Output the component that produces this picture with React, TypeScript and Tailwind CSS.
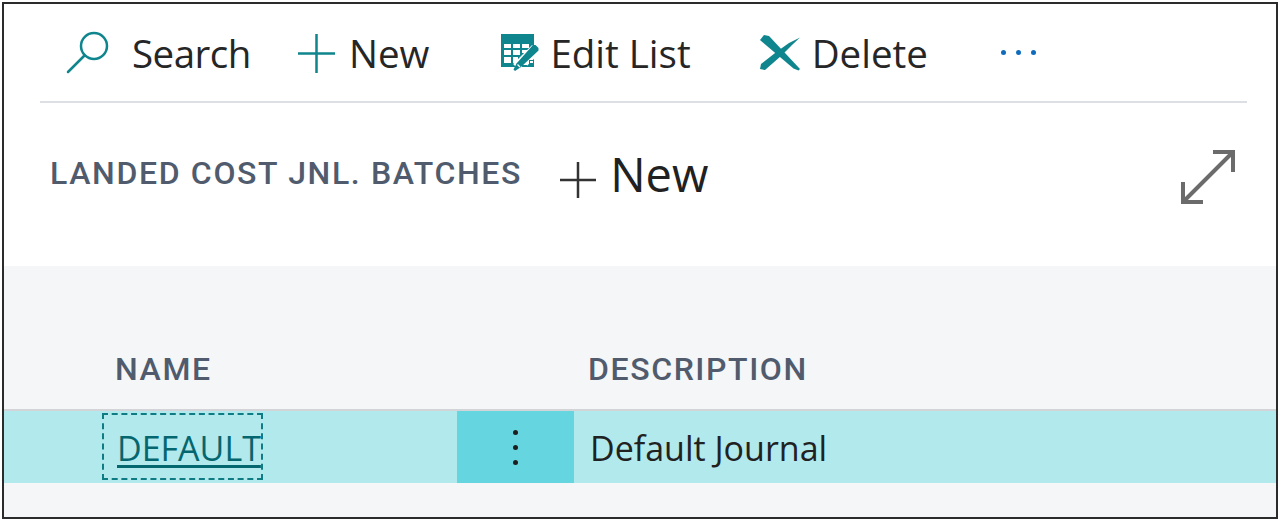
const sans = "font-['Open_Sans','Noto_Sans',sans-serif]";

function EditListIcon() {
  return (
    <svg width="39" height="38" viewBox="0 0 39 38" className="shrink-0">
      <rect x="1" y="0" width="33" height="33" fill="#0f858d" />
      <path d="M4 10h7v4H4zM13 10h7v4h-7zM22 10h7v4h-7zM4 16h7v5H4zM13 16h7v5h-7zM22 16h7v3h-7zM4 23h7v6H4zM13 23h5v6h-5z" fill="#fff" />
      <path d="M36 15 17 34" stroke="#fff" strokeWidth="11" />
      <path d="M33 11h2.500l3 3v2.500L21 33l-6 4 -1.500-1.500 3-6z" fill="#0f858d" />
      <path d="M17.500 30.500l2.500 2.500" stroke="#fff" strokeWidth="1.200" />
      <path d="M29 26h5v7h-5zM22 31h5v2h-5z" fill="#0f858d" />
      <path d="M30 27h3v2h-3z" fill="#fff" />
    </svg>
  );
}

function DeleteIcon() {
  return (
    <svg width="42" height="38" viewBox="0 0 42 38" className="shrink-0">
      <path d="M1 6 5 1l5 1 31 33-1.500 1.500-5-2z" fill="#0f858d" />
      <path d="M41 3.500 30 9 18 17.500 2 30l-1 5 5 1 16-14 11-11z" fill="#0f858d" />
    </svg>
  );
}

export default function App() {
  return (
    <div className={`h-[522px] w-[1283px] overflow-hidden bg-white ${sans}`}>
      <div className="mx-[2px] mt-[2px] flex h-[517px] w-[1276px] flex-col border-2 border-[#2b2b2b]">
        <div className="ml-[36px] mr-[29px] flex h-[99px] shrink-0 items-center border-b-2 border-[#dcdfe3] pt-[1px] text-[38.500px] leading-none text-[#262626]">
          <svg width="44" height="44" viewBox="0 0 44 44" className="ml-[26px] mt-[-1px] shrink-0" fill="none" stroke="#0f858d">
            <circle cx="28" cy="15" r="13" strokeWidth="2.500" />
            <path d="M18.500 24.500 2 41" strokeWidth="2.500" strokeLinecap="round" />
          </svg>
          <span className="ml-[22px] tracking-[-0.500px]">Search</span>
          <svg width="37" height="39" viewBox="0 0 37 39" className="ml-[47px] shrink-0" fill="none" stroke="#0f858d" strokeWidth="2.500">
            <path d="M0 19.500h37M18.500 0v39" />
          </svg>
          <span className="ml-[14px]">New</span>
          <div className="ml-[71px] shrink-0"><EditListIcon /></div>
          <span className="ml-[11px]">Edit List</span>
          <div className="ml-[68px] shrink-0"><DeleteIcon /></div>
          <span className="ml-[11px]">Delete</span>
          <div className="ml-[73px] mt-[-1px] flex gap-[10px]">
            <span className="size-[5px] rounded-full bg-[#0f6cbd]" />
            <span className="size-[5px] rounded-full bg-[#0f6cbd]" />
            <span className="size-[5px] rounded-full bg-[#0f6cbd]" />
          </div>
        </div>

        <div className="flex h-[163px] shrink-0 items-start pl-[46px] pr-[41px]">
          <span className="mt-[48px] font-['Roboto',sans-serif] text-[32px] font-medium leading-[44px] tracking-[1.650px] text-[#505c6d] whitespace-nowrap">LANDED COST JNL. BATCHES</span>
          <svg width="36" height="36" viewBox="0 0 36 36" className="ml-[38px] mt-[59px] shrink-0" fill="none" stroke="#333" strokeWidth="2.500">
            <path d="M0 18h36M18 0v36" />
          </svg>
          <span className="ml-[14px] mt-[39px] text-[47px] leading-[64px] text-[#212121]">New</span>
          <svg width="54" height="54" viewBox="0 0 54 54" className="ml-auto mt-[47px] shrink-0" fill="none" stroke="#6b6b6b" strokeWidth="4">
            <path d="M32 2h20v20M52 2 2 52M2 32v20h20" />
          </svg>
        </div>

        <div className="flex min-h-0 flex-1 flex-col bg-[#f5f6f8]">
          <div className="flex h-[145px] shrink-0 items-end border-b-2 border-[#d2d4d8] pb-[18px] font-['Roboto',sans-serif] text-[32px] font-medium leading-[44px] tracking-[1.600px] text-[#505c6d]">
            <span className="ml-[111px] w-[473px]">NAME</span>
            <span>DESCRIPTION</span>
          </div>
          <div className="flex h-[72px] shrink-0 items-stretch bg-[#b2e9ec]">
            <div className="ml-[98px] mt-[2px] h-[67px] w-[161px] border-2 border-dashed border-[#0f7c84] pl-[13px]">
              <span className="block whitespace-nowrap text-[34px] leading-[67px] text-[#04666f] underline decoration-[3px] underline-offset-[4px]">DEFAULT</span>
            </div>
            <div className="ml-[194px] flex w-[117px] flex-col items-center justify-center gap-[10px] bg-[#65d6df]">
              <span className="size-[5px] rounded-full bg-[#1f1f1f]" />
              <span className="size-[5px] rounded-full bg-[#1f1f1f]" />
              <span className="size-[5px] rounded-full bg-[#1f1f1f]" />
            </div>
            <span className="ml-[16px] mt-[2px] self-center text-[34px] leading-none text-[#212121]">Default Journal</span>
          </div>
        </div>
      </div>
    </div>
  );
}
